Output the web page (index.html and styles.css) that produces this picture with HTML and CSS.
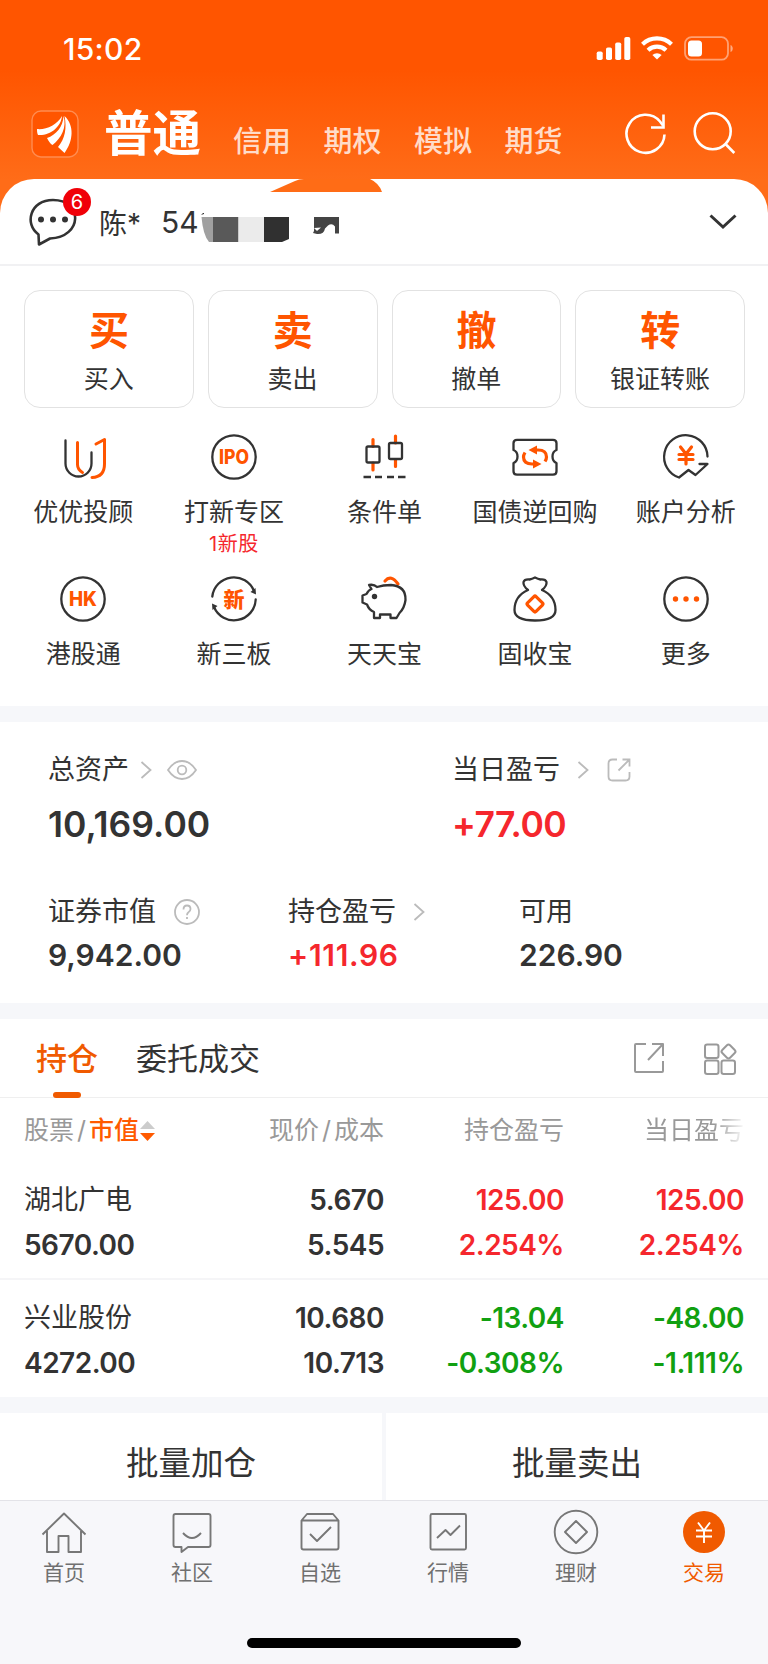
FILE: index.html
```
<!DOCTYPE html>
<html lang="zh-CN">
<head>
  <meta charset="UTF-8">
  <title>交易</title>
  <link rel="stylesheet" href="styles.css">
</head>
<body>
  <header class="top">
    <div class="status-bar">
      <span class="time">15:02</span>
      <svg class="status-icons" width="138" height="26" viewBox="0 0 138 26">
        <g fill="#fff">
          <rect x="0.7" y="16.5" width="6" height="8.5" rx="1.8"/>
          <rect x="10" y="12.5" width="6" height="12.5" rx="1.8"/>
          <rect x="19.2" y="7.5" width="6" height="17.5" rx="1.8"/>
          <rect x="28.3" y="2" width="6" height="23" rx="1.8"/>
          <path d="M61 24.5l-4.6-4.4a6.6 6.6 0 0 1 9.2 0z"/>
        </g>
        <g fill="none" stroke="#fff" stroke-width="4.2">
          <path d="M46.5 9.2a21 21 0 0 1 29 0"/>
          <path d="M52 15.3a13 13 0 0 1 18 0"/>
        </g>
        <rect x="89" y="2.2" width="43" height="22.5" rx="6.5" fill="none" stroke="#fff" stroke-opacity=".45" stroke-width="1.8"/>
        <rect x="92" y="5.500" width="14" height="16" rx="3.5" fill="#fff"/>
        <path d="M134.5 10v7c3-1 3-6 0-7z" fill="#fff" fill-opacity=".5"/>
      </svg>
    </div>
    <nav class="nav">
      <svg class="logo" width="48" height="48" viewBox="0 0 48 48">
        <rect x="1" y="1" width="46" height="46" rx="9" fill="#ff5500" stroke="#ff8c50" stroke-width="1.4"/>
        <g fill="#fff">
          <path d="M6 19c9 1 20-4 25-13-1 11-12 20-24 19-1-2-1-4-1-6z"/>
          <path d="M16 28c9-3 16-11 16.5-22 3.5 11-2 22-11 29-2-1-4-4-5.500-7z"/>
          <path d="M27 37c7-8 9-19 6.5-31 10 9 9 25 0 37z"/>
        </g>
      </svg>
      <b class="nav-active">普通</b>
      <span>信用</span>
      <span>期权</span>
      <span>模拟</span>
      <span>期货</span>
      <svg class="nav-icons" width="112" height="44" viewBox="0 0 112 44" fill="none" stroke="#fff" stroke-width="2.6">
        <path d="M40.500 22.500A19 19 0 1 1 36 9.500l3 4"/>
        <path d="M39.500 2.500v13H27"/>
        <circle cx="88.700" cy="19.3" r="18"/>
        <path d="M101 31.500l9.300 9.500"/>
      </svg>
    </nav>
  </header>

  <main class="sheet">
    <section class="account">
      <svg class="blob" width="112" height="13" viewBox="0 0 112 13"><path d="M0 13L25 2q4-2 9-2h66q9 4 12 13z" fill="#ff6c16"/></svg>
      <div class="chat">
        <svg width="50" height="48" viewBox="0 0 50 48">
          <path d="M10.5 36.500C-4 26 2 2 25 2c30 0 30 37-3 38.500L11 46.500z" fill="none" stroke="#333" stroke-width="2.6" stroke-linejoin="round"/>
          <g fill="#333"><circle cx="13" cy="21.500" r="3"/><circle cx="25" cy="21.500" r="3"/><circle cx="37" cy="21.500" r="3"/></g>
        </svg>
        <span class="badge">6</span>
      </div>
      <span class="owner">陈*</span>
      <span class="acct-no">54</span>
      <svg class="mosaic" width="140" height="30" viewBox="0 0 140 30">
        <path d="M1 2l3-3v2z" fill="#333"/>
        <path d="M1.500 4H13v25H9Q3 22 1.500 4z" fill="#a0a0a0"/>
        <path d="M13 4h25.500v25H13z" fill="#595959"/>
        <path d="M38.500 4H64v25H38.500z" fill="#ebebeb"/>
        <path d="M64 4h25v22l-7 3H64z" fill="#303030"/>
        <path d="M114 4h25v16.500h-4v-7q-3-4-7-1l-3 3q-1 6-8 5.500l-4-1 1-2z" fill="#444"/>
        <path d="M114 15l7-.5-4 3.500z" fill="#fff"/>
        <path d="M126 21v-5q3-4 7-3l1.500 2v6z" fill="#fff"/>
      </svg>
      <svg class="down" width="28" height="16" viewBox="0 0 28 16" fill="none" stroke="#333" stroke-width="3"><path d="M1.500 1.500L14 13 26.500 1.500"/></svg>
    </section>

    <section class="cards">
      <div class="card"><b>买</b><span>买入</span></div>
      <div class="card"><b>卖</b><span>卖出</span></div>
      <div class="card"><b>撤</b><span>撤单</span></div>
      <div class="card"><b>转</b><span>银证转账</span></div>
    </section>

    <section class="tools">
      <div class="tool">
        <svg class="ico" viewBox="0 0 46 46">
          <path d="M5.500 6.500v23a13 13 0 0 0 26 0V18.500"/>
          <path class="o" d="M17.500 8.500v22q0 5 5 8M36 10l8.500-4.500V30q0 13-12.500 13.500"/>
        </svg>
        <span>优优投顾</span>
      </div>
      <div class="tool">
        <svg class="ico" viewBox="0 0 46 46">
          <circle cx="23" cy="23" r="21.700"/>
          <text x="23" y="30.300" font-size="20" textLength="30" lengthAdjust="spacingAndGlyphs">IPO</text>
        </svg>
        <span>打新专区</span>
        <em>1新股</em>
      </div>
      <div class="tool">
        <svg class="ico" viewBox="0 0 46 46">
          <path class="o s" d="M12 5.500v7M12 29v7M34.500 2v7M34.500 25.500v7"/>
          <rect x="5.500" y="12.500" width="13" height="16" rx="1.500"/>
          <rect x="28" y="9" width="13" height="16" rx="1.500"/>
          <path stroke-linecap="butt" d="M2.500 43H10M14 43h7M26 43h7M37 43h7.500"/>
        </svg>
        <span>条件单</span>
      </div>
      <div class="tool">
        <svg class="ico" viewBox="0 0 46 46">
          <path d="M5 5.800h36q3.500 0 3.500 3.500v6.700q-4 1.500-4 6.500t4 6.500v8.200q0 3.500-3.500 3.500H5q-3.500 0-3.500-3.500V29q4-1.500 4-6.500t-4-6.500V9.300q0-3.500 3.500-3.500z"/>
          <path class="o s" stroke-linecap="butt" d="M22 16h4q8.500 0 8.500 7 0 2-1.500 4.500M24 30h-4q-8.500 0-8.500-7 0-2 1.500-4.500"/>
          <path class="f" d="M16.500 16l8.500-4.500v9zM29.500 30L21 25.500v9z"/>
        </svg>
        <span>国债逆回购</span>
      </div>
      <div class="tool">
        <svg class="ico" viewBox="0 0 46 46">
          <path d="M44.500 22.500A21.700 21.700 0 1 0 16 43.500L25.500 36l7 5 12-11h-8"/>
          <path class="o s" d="M17.500 13L23 20l5.500-7M16 20.500h14M16 25.500h14M23 20v10"/>
        </svg>
        <span>账户分析</span>
      </div>
      <div class="tool">
        <svg class="ico" viewBox="0 0 46 46">
          <circle cx="23" cy="23" r="21.700"/>
          <text x="23" y="30.200" font-size="20" textLength="28" lengthAdjust="spacingAndGlyphs">HK</text>
        </svg>
        <span>港股通</span>
      </div>
      <div class="tool">
        <svg class="ico" viewBox="0 0 46 46">
          <path d="M1.300 20.500A21.700 21.700 0 0 1 43 15M44.700 23.500A21.700 21.700 0 0 1 3 31"/>
          <path fill="#333" stroke="none" d="M39.500 16l5-4 .5 6.500zM6.500 30l-5 4L1 27.500z"/>
          <text x="23" y="30.500" font-size="21">新</text>
        </svg>
        <span>新三板</span>
      </div>
      <div class="tool">
        <svg class="ico" viewBox="0 0 46 46">
          <path class="o s" d="M24 5q6-7 13 3"/>
          <path d="M8 9q5-1 8 2 6-2 14-2 15 1 14.500 15-1 8-6 13l-3 5h-6v-3.500H19V42h-6v-6q-5-2-7-7.500l-4.500-2v-7l4-1.500q2-4 5-5z"/>
          <circle cx="13.500" cy="20.500" r="2.700" fill="#333" stroke="none"/>
        </svg>
        <span>天天宝</span>
      </div>
      <div class="tool">
        <svg class="ico" viewBox="0 0 46 46">
          <path d="M16 14q-5-4-4.500-8 1-3 6-2.500 2.500-.5 5.500-2 3 1.500 5.500 2 5-.5 6 2.500.5 4-4.500 8 13.500 6 13.500 20 0 10.500-20.500 10.500T2.500 34q0-14 13.500-20z"/>
          <rect class="o s" x="17" y="22" width="12" height="12" rx="1.500" transform="rotate(45 23 28)"/>
        </svg>
        <span>固收宝</span>
      </div>
      <div class="tool">
        <svg class="ico" viewBox="0 0 46 46">
          <circle cx="23" cy="23" r="21.700"/>
          <g class="f"><circle cx="12.500" cy="23" r="2.700"/><circle cx="23" cy="23" r="2.700"/><circle cx="33.500" cy="23" r="2.700"/></g>
        </svg>
        <span>更多</span>
      </div>
    </section>

    <section class="assets">
      <div class="asset wide">
        <div class="asset-label">总资产
          <svg class="arrow" viewBox="0 0 12 18"><path d="M1.500 1l9 8-9 8"/></svg>
          <svg class="eye" viewBox="0 0 30 20"><path d="M1 10Q7 1 15 1t14 9q-6 9-14 9T1 10z"/><circle cx="15" cy="10" r="4.300"/></svg>
        </div>
        <div class="asset-num">10,169.00</div>
      </div>
      <div class="asset wide">
        <div class="asset-label">当日盈亏
          <svg class="arrow" viewBox="0 0 12 18"><path d="M1.500 1l9 8-9 8"/></svg>
          <svg class="share" viewBox="0 0 24 24"><path d="M10 1.500H5.500q-4 0-4 4v13q0 4 4 4h13q4 0 4-4V14M15.500 1.500h7v7M22 2L11.500 12.500"/></svg>
        </div>
        <div class="asset-num red tight">+77.00</div>
      </div>
      <div class="asset">
        <div class="asset-label">证券市值
          <svg class="help" viewBox="0 0 26 26"><circle cx="13" cy="13" r="12"/><path d="M9.500 10.500q0-4 3.500-4t3.500 3.500q0 2-2 3.200-1.500 1-1.500 3M13 18v2"/></svg>
        </div>
        <div class="asset-num">9,942.00</div>
      </div>
      <div class="asset">
        <div class="asset-label">持仓盈亏
          <svg class="arrow" viewBox="0 0 12 18"><path d="M1.500 1l9 8-9 8"/></svg>
        </div>
        <div class="asset-num red loose">+111.96</div>
      </div>
      <div class="asset">
        <div class="asset-label">可用</div>
        <div class="asset-num">226.90</div>
      </div>
    </section>

    <section class="holdings">
      <div class="tabs">
        <span class="tab on">持仓</span>
        <span class="tab">委托成交</span>
        <svg class="tab-icons" width="106" height="34" viewBox="0 0 106 34">
          <path d="M13 2H3q-1 0-1 1v26q0 1 1 1h26q1 0 1-1V19M19 2h11v12M30 2L15 18"/>
          <rect x="72" y="2.500" width="13.500" height="13.500" rx="2.200"/>
          <rect x="72" y="18.500" width="13.500" height="13.500" rx="2.200"/>
          <rect x="88.500" y="18.500" width="13.500" height="13.500" rx="2.200"/>
          <rect x="90" y="4" width="11" height="11" rx="2.200" transform="rotate(45 95.500 9.500)"/>
        </svg>
      </div>
      <div class="row head">
        <span>股票<i>/</i><b>市值</b><svg class="sort" width="15" height="20" viewBox="0 0 15 20"><path d="M7.500 0L15 8H0z" fill="#ccc"/><path d="M7.500 20L15 12H0z" fill="#ff5a00"/></svg></span>
        <span>现价<i>/</i>成本</span>
        <span>持仓盈亏</span>
        <span class="fade">当日盈亏</span>
      </div>
      <div class="row stock">
        <span class="name">湖北广电</span><span>5.670</span><span class="red">125.00</span><span class="red">125.00</span>
        <span>5670.00</span><span>5.545</span><span class="red">2.254%</span><span class="red">2.254%</span>
      </div>
      <div class="row stock">
        <span class="name">兴业股份</span><span>10.680</span><span class="green">-13.04</span><span class="green">-48.00</span>
        <span>4272.00</span><span>10.713</span><span class="green">-0.308%</span><span class="green">-1.111%</span>
      </div>
    </section>

    <section class="batch">
      <div>批量加仓</div>
      <div>批量卖出</div>
    </section>
  </main>

  <footer class="tabbar">
    <div class="items">
      <div class="item">
        <svg viewBox="0 0 46 46"><path d="M1.500 25.500L23 4.500l21.500 21M6 22v21h11.500V27h10v16H40V22"/></svg>
        <span>首页</span>
      </div>
      <div class="item">
        <svg viewBox="0 0 46 46"><path d="M6.500 5h33q2 0 2 2v29q0 2-2 2H19l-6.500 5v-5h-6q-2 0-2-2V7q0-2 2-2zM14 24q9 10 18 0"/></svg>
        <span>社区</span>
      </div>
      <div class="item">
        <svg viewBox="0 0 46 46"><path d="M4.500 11.500L10 5h26l5.500 6.500v27q0 2-2 2h-33q-2 0-2-2zM4.500 11.500h37M13 25l7 7 14-14"/></svg>
        <span>自选</span>
      </div>
      <div class="item">
        <svg viewBox="0 0 46 46"><rect x="5.500" y="5" width="35.500" height="35.500" rx="1.500"/><path d="M12 29l8.500-8 5 5L35 16.500"/></svg>
        <span>行情</span>
      </div>
      <div class="item">
        <svg viewBox="0 0 46 46"><circle cx="23" cy="23" r="21.300"/><path d="M23 12l11 11-11 11-11-11z"/></svg>
        <span>理财</span>
      </div>
      <div class="item on">
        <svg viewBox="0 0 46 46"><circle class="disc" cx="23" cy="23" r="21"/><path d="M17 13.500l6 8 6-8M15 21.500h16M15 27.500h16M23 21v13"/></svg>
        <span>交易</span>
      </div>
    </div>
    <div class="home-bar"></div>
  </footer>
</body>
</html>
```
FILE: styles.css
```
* {
  box-sizing: border-box;
}

body {
  margin: 0;
  width: 768px;
  height: 1664px;
  overflow: hidden;
  background: linear-gradient(#ff5500 0, #ff5500 70px, #ff6c18 180px, #ff6c18 260px, #fff 260px);
  font-family: Inter, "Noto Sans CJK SC", sans-serif;
  color: #333;
}

svg {
  display: block;
  flex: none;
}

.red { color: #f5272d; }
.green { color: #11a011; }

/* 顶部 */
.top {
  height: 179px;
  color: #fff;
}

.status-bar {
  height: 92px;
  padding: 35px 34px 0 63px;
  display: flex;
  justify-content: space-between;
}

.time {
  font-size: 30px;
  line-height: 28px;
  font-weight: 550;
  letter-spacing: 0.3px;
}

.nav {
  height: 87px;
  padding: 0 32px 3px 31px;
  display: flex;
  align-items: center;
}

.nav-active {
  margin: 0 15px 0 25px;
  font-size: 48.5px;
  line-height: 52px;
}

.nav span {
  margin: 15px 0 0 17px;
  width: 73.5px;
  font-size: 29px;
  line-height: 32px;
  font-weight: 500;
  color: #ffdcc9;
}

.nav-icons {
  margin: 0 0 0 auto;
}

/* 账户 */
.sheet {
  background: #fff;
  border-radius: 34px 34px 0 0;
}

.account {
  position: relative;
  height: 87px;
  padding: 0 31px 0 28px;
  border-bottom: 2px solid #f1f1f3;
  display: flex;
  align-items: center;
}

.blob {
  position: absolute;
  left: 270px;
  top: 0;
}

.chat {
  position: relative;
}

.badge {
  position: absolute;
  left: 35px;
  top: -10px;
  width: 28px;
  height: 28px;
  border-radius: 50%;
  background: #f00008;
  color: #fff;
  font-size: 20px;
  line-height: 28px;
  text-align: center;
}

.owner {
  margin-left: 21px;
  width: 62px;
  font-size: 28px;
}

.acct-no {
  font-size: 30px;
}

.mosaic {
  margin: 13px 0 0 1px;
}

.down {
  margin-left: auto;
}

/* 买卖入口 */
.cards {
  padding: 24px 23px 0 24px;
  display: grid;
  grid-template-columns: repeat(4, 1fr);
  gap: 14px;
}

.card {
  height: 118px;
  padding-top: 17px;
  border: 1.5px solid #e2e2e2;
  border-radius: 16px;
  display: flex;
  flex-direction: column;
  align-items: center;
}

.card b {
  font-size: 40px;
  line-height: 46px;
  color: #ff5500;
}

.card span {
  margin-top: 10px;
  font-size: 25px;
  line-height: 30px;
}

/* 功能图标 */
.tools {
  height: 298px;
  padding: 26px 7px 0 8px;
  display: grid;
  grid-template-columns: repeat(5, 1fr);
  grid-auto-rows: 142px;
}

.tool {
  display: flex;
  flex-direction: column;
  align-items: center;
}

.tool span {
  margin-top: 17px;
  font-size: 25px;
  line-height: 30px;
}

.tool em {
  margin-top: 5px;
  font-size: 20px;
  line-height: 24px;
  letter-spacing: 0.5px;
  font-style: normal;
  color: #f5272d;
}

.ico {
  width: 46px;
  height: 46px;
  overflow: visible;
  fill: none;
  stroke: #333;
  stroke-width: 2.3;
  stroke-linejoin: round;
  stroke-linecap: round;
}

.ico .o {
  stroke: #ff5500;
  stroke-width: 3;
}

.ico .s {
  stroke-width: 3.2;
}

.ico .f {
  fill: #ff5500;
  stroke: none;
}

.ico text {
  fill: #ff5500;
  stroke: none;
  font-weight: 800;
  text-anchor: middle;
}

/* 资产 */
.assets {
  height: 313px;
  padding: 31px 0 0 48px;
  border-top: 16px solid #f6f7fa;
  border-bottom: 16px solid #f6f7fa;
  display: grid;
  grid-template-columns: 240px 164px 67px 1fr;
  grid-template-rows: 142px 1fr;
}

.asset.wide:first-child { grid-column: 1 / 3; }
.asset.wide:nth-child(2) { grid-column: 3 / 5; }
.asset:nth-child(4) { grid-column: 2 / 4; }

.asset-label {
  height: 34px;
  display: flex;
  align-items: center;
  font-size: 27px;
  line-height: 34px;
}

.asset-label svg {
  margin-bottom: 1px;
  fill: none;
  stroke: #bbb;
  stroke-width: 1.8;
}

.arrow {
  width: 12px;
  height: 18px;
  margin: 0 15px 0 11px;
}

.wide:nth-child(2) .arrow,
.asset:nth-child(4) .arrow {
  margin: 0 18px 0 17px;
}

.eye { width: 30px; height: 20px; }
.share { width: 24px; height: 24px; }
.help { width: 26px; height: 26px; margin-left: 18px; }

.asset-num {
  margin-top: 8px;
  font-size: 30px;
  line-height: 36px;
  font-weight: 600;
}

.loose { letter-spacing: 0.7px; }

.wide .asset-num {
  margin-top: 18px;
  font-size: 35.5px;
  line-height: 40px;
}

.wide .tight { letter-spacing: -0.5px; }

/* 持仓 */
.tabs {
  position: relative;
  height: 79px;
  padding: 0 29px 3px 36px;
  border-bottom: 1.5px solid #efefef;
  display: flex;
  align-items: center;
}

.tab {
  margin-right: 38px;
  font-size: 31px;
}

.tab.on {
  position: relative;
  color: #f05a00;
  font-weight: 500;
}

.tab.on::after {
  content: "";
  position: absolute;
  left: 17px;
  bottom: -19px;
  width: 28px;
  height: 6px;
  border-radius: 3px;
  background: #f05a00;
}

.tab-icons {
  margin: 5px 0 0 auto;
  fill: none;
  stroke: #999;
  stroke-width: 2;
  stroke-linejoin: round;
}

.row {
  padding: 0 24px;
  display: grid;
  grid-template-columns: 190px 170px 180px 180px;
  text-align: right;
}

.row span:nth-child(4n + 1) {
  text-align: left;
}

.head {
  height: 74px;
  padding-top: 15px;
  font-size: 25px;
  line-height: 34px;
  color: #999;
}

.head b {
  font-weight: 500;
  color: #ff5a00;
}

.head i {
  margin: 0 3px;
  font-style: normal;
}

.head .sort {
  display: inline-block;
  margin-left: 1px;
  vertical-align: -2px;
}

.fade {
  -webkit-mask-image: linear-gradient(90deg, #000 150px, transparent 182px);
  mask-image: linear-gradient(90deg, #000 150px, transparent 182px);
}

.stock {
  height: 106px;
  padding-top: 6px;
  grid-auto-rows: 44.5px;
  font-size: 28px;
  line-height: 44px;
  font-weight: 600;
  letter-spacing: -0.5px;
}

.stock + .stock {
  height: 119px;
  padding-top: 16px;
  border-top: 2px solid #f5f5f7;
}

.stock .name {
  font-size: 27px;
  font-weight: 400;
  letter-spacing: 0;
}

.batch {
  border-top: 16px solid #f6f7fa;
  height: 103px;
  background: #f6f7fa;
  display: grid;
  grid-template-columns: 1fr 1fr;
  gap: 4px;
}

.batch div {
  background: #fff;
  padding-top: 31px;
  font-size: 32.5px;
  line-height: 40px;
  text-align: center;
}

/* 底部导航 */
.tabbar {
  height: 164px;
  background: #f7f7fa;
  border-top: 1.5px solid #e3e3e8;
}

.items {
  height: 137px;
  padding-top: 8px;
  display: flex;
}

.item {
  flex: 1;
  display: flex;
  flex-direction: column;
  align-items: center;
  font-size: 21px;
  color: #707070;
}

.item svg {
  width: 46px;
  height: 46px;
  fill: none;
  stroke: #777;
  stroke-width: 1.9;
  stroke-linejoin: round;
}

.item span {
  margin-top: 5px;
  line-height: 26px;
}

.item.on { color: #f05a00; }
.item.on svg { stroke: #fff; }
.item .disc { fill: #f05a00; stroke: none; }

.home-bar {
  width: 274px;
  height: 10px;
  margin: 0 auto;
  border-radius: 5px;
  background: #000;
}
```
